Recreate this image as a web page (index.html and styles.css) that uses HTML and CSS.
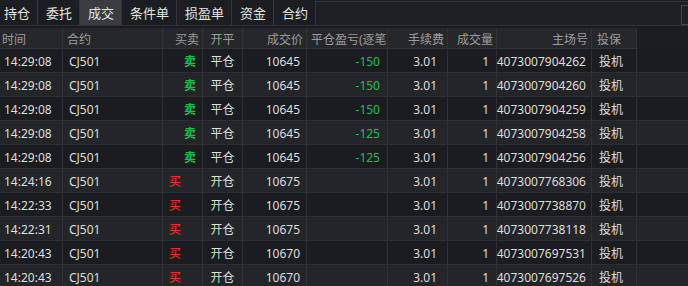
FILE: index.html
```html
<!DOCTYPE html>
<html lang="zh-CN">
  <head>
    <meta charset="UTF-8" />
    <title>成交</title>
    <link rel="stylesheet" href="styles.css">
  </head>
  <body>
    <div class="tabs">
      <div class="tab first">持仓</div>
      <div class="tab">委托</div>
      <div class="tab active">成交</div>
      <div class="tab">条件单</div>
      <div class="tab">损盈单</div>
      <div class="tab">资金</div>
      <div class="tab">合约</div>
      <div class="tab-rest"><span class="corner"></span></div>
    </div>

    <div class="table">
      <div class="row head">
        <div class="cell c-time">时间</div>
        <div class="cell c-code">合约</div>
        <div class="cell c-side">买卖</div>
        <div class="cell c-oc">开平</div>
        <div class="cell c-price">成交价</div>
        <div class="cell c-pnl">平仓盈亏(逐笔)</div>
        <div class="cell c-fee">手续费</div>
        <div class="cell c-vol">成交量</div>
        <div class="cell c-no">主场号</div>
        <div class="cell c-hedge">投保</div>
        <div class="fill"></div>
      </div>
      <div id="rows"></div>
    </div>

    <script>
      const trades = [
        ["14:29:08", "卖", "平仓", "10645", "-150", "24073007904262"],
        ["14:29:08", "卖", "平仓", "10645", "-150", "24073007904260"],
        ["14:29:08", "卖", "平仓", "10645", "-150", "24073007904259"],
        ["14:29:08", "卖", "平仓", "10645", "-125", "24073007904258"],
        ["14:29:08", "卖", "平仓", "10645", "-125", "24073007904256"],
        ["14:24:16", "买", "开仓", "10675", "", "24073007768306"],
        ["14:22:33", "买", "开仓", "10675", "", "24073007738870"],
        ["14:22:31", "买", "开仓", "10675", "", "24073007738118"],
        ["14:20:43", "买", "开仓", "10670", "", "24073007697531"],
        ["14:20:43", "买", "开仓", "10670", "", "24073007697526"],
      ];

      const box = document.getElementById("rows");
      trades.forEach(([time, side, oc, price, pnl, no]) => {
        const sideCls = side === "买" ? "buy" : "sell";
        box.insertAdjacentHTML(
          "beforeend",
          `<div class="row">
            <div class="cell c-time">${time}</div>
            <div class="cell c-code">CJ501</div>
            <div class="cell c-side ${sideCls}">${side}</div>
            <div class="cell c-oc">${oc}</div>
            <div class="cell c-price">${price}</div>
            <div class="cell c-pnl">${pnl}</div>
            <div class="cell c-fee">3.01</div>
            <div class="cell c-vol">1</div>
            <div class="cell c-no"><span>${no}</span></div>
            <div class="cell c-hedge">投机</div>
            <div class="fill"></div>
          </div>`
        );
      });
    </script>
  </body>
</html>
```

FILE: styles.css
```css
body {
  margin: 0;
  background: #1b1c1f;
  color: #dedede;
  font-family: "Noto Sans", "Noto Sans CJK SC", sans-serif;
  font-size: 12px;
  overflow: hidden;
}

.tabs {
  display: flex;
  height: 25px;
  border-bottom: 1px solid #303135;
  background: #1c1d20;
}

.tab {
  display: flex;
  align-items: center;
  padding: 0 7px 0 8px;
  border-right: 1px solid #34353a;
  color: #e4e4e4;
  font-size: 13px;
}

.tab.first {
  padding-left: 4px;
}

.tab.active {
  background: #3b3c40;
}

.tab-rest {
  flex: 1;
  display: flex;
  justify-content: flex-end;
  align-items: flex-start;
  border-top: 1px solid #34353a;
  margin-top: 1px;
  background: #1f2023;
}

.corner {
  width: 6px;
  height: 18px;
  margin-top: 3px;
  border: 1px solid #45464b;
  border-right: none;
}

.table {
  margin-top: 2px;
}

.row {
  display: grid;
  grid-template-columns: 63px 100px 40px 40px 64px 81px 60px 49px 95px 45px 1fr;
  height: 24px;
  border-bottom: 1px solid #2e2f33;
  box-sizing: border-box;
}

#rows .row:nth-child(odd) {
  background: #1b1c1f;
}

#rows .row:nth-child(even) {
  background: #242529;
}

.cell {
  display: flex;
  align-items: center;
  justify-content: flex-end;
  padding: 1px 6px 0;
  border-right: 1px solid #313236;
  box-sizing: border-box;
  white-space: nowrap;
  overflow: hidden;
}

.row.head {
  height: 21px;
  border-bottom: none;
}

.head .cell {
  background: #26272b;
  color: #9c9c9c;
  border-bottom: 1px solid #313236;
  padding: 2px 3px 0;
}

.head .fill {
  background: #1c1d20;
}

.c-time {
  justify-content: flex-start;
  padding-left: 4px;
}

.head .c-time {
  padding-left: 2px;
}

.c-code {
  justify-content: flex-start;
}

.head .c-code {
  padding-left: 4px;
}

.c-oc {
  justify-content: center;
}

.c-pnl {
  padding-right: 7px;
  color: #20c04c;
}

.head .c-pnl {
  justify-content: flex-start;
  padding-left: 4px;
}

.c-fee {
  padding-right: 10px;
}

.c-vol {
  padding-right: 7px;
}

.c-no {
  padding-right: 6px;
  padding-left: 0;
}

.c-no span {
  margin-right: -1px;
}

.c-hedge {
  justify-content: flex-start;
  padding-left: 7px;
}

.head .c-hedge {
  padding-left: 5px;
}

.sell {
  color: #1fbf4a;
  font-weight: bold;
}

.buy {
  justify-content: flex-start;
  color: #ff3535;
}
```
